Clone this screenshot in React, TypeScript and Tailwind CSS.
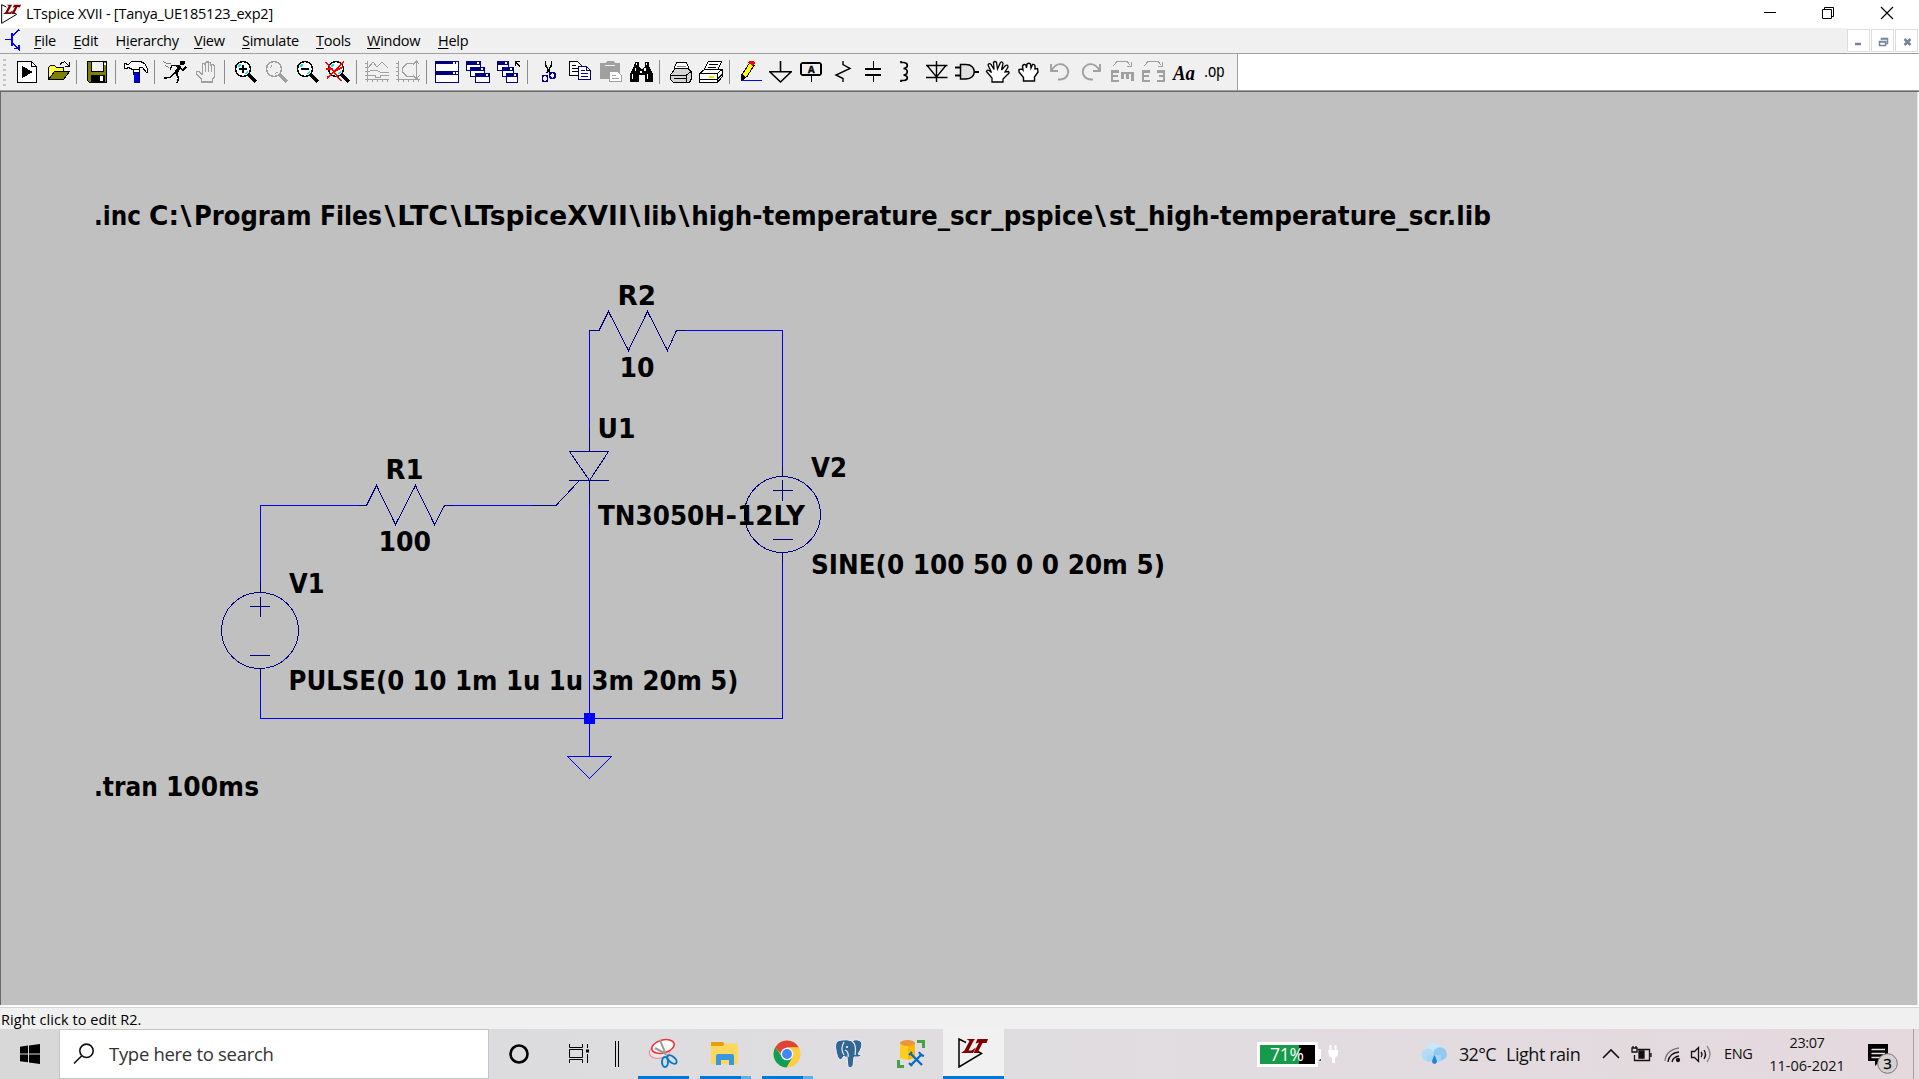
import React from "react";

type Kids = { children?: React.ReactNode };

const NAVY = "#000080";
const GRAY = "#a0a0a0";

/* ---------- toolbar ---------- */

function Tool({ children, smooth }: Kids & { smooth?: boolean }) {
  return (
    <svg
      className="h-6 w-[31px] shrink-0"
      viewBox="0 0 31 24"
      fill="none"
      stroke="#000"
      strokeWidth="1"
      shapeRendering={smooth ? "auto" : "crispEdges"}
    >
      {children}
    </svg>
  );
}

function Sep() {
  return (
    <div className="flex h-6 w-2 shrink-0 pl-0.5">
      <div className="h-6 w-px bg-[#8c8c8c]" />
    </div>
  );
}

function Lens({ color = "#000", glass = "#fff" }: { color?: string; glass?: string }) {
  return (
    <g>
      <circle cx="13" cy="9" r="7.5" fill={glass} stroke={color} strokeWidth="1.6" />
      {color === "#000" && <path d="M8 7L10.5 4.5M15.5 14L18 11.5" stroke="#00e5ee" strokeWidth="2" />}
      <path d="M19 15L26 22" stroke={color} strokeWidth="3" />
    </g>
  );
}

function MiniWin({ x, y, w = 14, h = 9 }: { x: number; y: number; w?: number; h?: number }) {
  return (
    <g>
      <rect x={x + 0.5} y={y + 0.5} width={w} height={h} fill="#fff" stroke={NAVY} />
      <rect x={x} y={y} width={w + 1} height="4" fill={NAVY} stroke="none" />
      <rect x={x + w - 3} y={y + 1} width="2" height="2" fill="#fff" stroke="none" />
    </g>
  );
}

function Toolbar() {
  return (
    <div className="flex h-[36px] w-full bg-white">
      <div className="flex h-[36px] w-[1238px] items-center border-r border-[#a0a0a0] bg-[#f0f0f0]">
        <div className="flex w-3 shrink-0 flex-col gap-[3px] pl-[3px]">
          {[0, 1, 2, 3, 4, 5].map((i) => (
            <div key={i} className="h-[2px] w-[3px] bg-[#c4c4c4]" />
          ))}
        </div>
        <Tool>
          <path d="M5.5 1.5H19.5L24.5 6.5V22.5H5.5Z" fill="#fff" />
          <path d="M19.5 1.5V6.5H24.5" />
          <path d="M10 6L21 12L10 18Z" fill="#000" stroke="none" />
        </Tool>
        <Tool>
          <path d="M5.5 19V7.5L7.5 5.5H11.5L13.5 7.5H20.5V12" fill="#ffff40" />
          <path d="M5.5 19.5L11.5 11.5H26.5L20.5 19.5Z" fill="#808000" />
          <path d="M17 4.5Q19 1.5 22 2L26 6M26.5 2V6.5H22" />
        </Tool>
        <Sep />
        <Tool>
          <path d="M5.5 1.5H24.5V22.5H7.5L5.5 20.5Z" fill="#808000" />
          <rect x="9.5" y="1.5" width="12" height="10" fill="#f0f0f0" />
          <rect x="22" y="3" width="2" height="2" fill="#fff" stroke="none" />
          <rect x="9" y="15" width="14" height="7" fill="#000" stroke="none" />
          <rect x="18" y="16" width="3" height="5" fill="#fff" stroke="none" />
        </Tool>
        <Sep />
        <Tool>
          <path d="M3.5 3.5V8.5H5.5L7.5 7.5L11.5 9.5H18.5V7.5L21.5 7.5L25.5 12.5H26.5V8.5L23.5 3.5L19.5 1.5H10.5L7.5 4.5Z" fill="#fff" />
          <path d="M12.5 9.5V12.5H18.5V9.5" fill="#fff" />
          <rect x="13" y="13" width="5" height="9" fill="#0000e8" stroke="none" />
          <path d="M12.5 12V15M18.5 12V22M13 22.5H19" stroke="#000060" />
        </Tool>
        <Sep />
        <Tool>
          <path d="M20 1h5v3l-2 1h-3Z" fill="#000" stroke="none" />
          <path d="M20 6L16 13" strokeWidth="3.5" />
          <path d="M20 6L12 5.5L10 9.5M20 8L23 10L26 7M15 13L10 17.5L4 18M16 13L18.5 18L17 23" strokeWidth="1.5" />
          <path d="M3 1.5L8 4L11 3M5 5.5L9 7.5" stroke="#808080" />
        </Tool>
        <Tool>
          <path
            d="M10.5 22V19L5.5 13.5V11.5H8L11.5 14.5V4.5L12.5 3.5L14.5 5V2.5L16 1.5L17.5 3V2L19.5 2.5V5L21.5 4.5L23.5 6V17.5L21.5 19V22Z"
            fill="#f0f0f0"
            stroke={GRAY}
            strokeWidth="1.4"
          />
          <path d="M14.5 5V12M17.5 3V12M20.5 5V12" stroke={GRAY} strokeWidth="1.4" />
        </Tool>
        <Sep />
        <Tool>
          <Lens />
          <path d="M9 9H17M13 5V13" strokeWidth="2" />
        </Tool>
        <Tool>
          <Lens color={GRAY} glass="#f0f0f0" />
          <path d="M9 8L11 5.5M14 14L16.5 12" stroke={GRAY} />
        </Tool>
        <Tool>
          <Lens />
          <path d="M9 9H17" strokeWidth="2" />
        </Tool>
        <Tool>
          <Lens />
          <path d="M3 2L18 21M21 2L4 18M3 9H10M10 12L20 7" stroke="#f00" strokeWidth="1.5" />
        </Tool>
        <Sep />
        <Tool>
          <g stroke={GRAY}>
            <path d="M5.5 1V22M3 19.5H27M3 3.5H6M3 7.5H6M3 11.5H6M3 15.5H6M10.5 19V22M15.5 19V22M20.5 19V22M25.5 19V22" />
            <path d="M6 8L11 2L15 7L20 2L26 8M6 12L10 10L14 10L18 12H27M6 15.5H13V17.5H18V15.5H27" />
          </g>
        </Tool>
        <Tool>
          <g stroke={GRAY}>
            <path d="M5.5 1V22M3 19.5H27M3 3.5H6M3 7.5H6M3 11.5H6M3 15.5H6M10.5 19V22M15.5 19V22M20.5 19V22M25.5 19V22" />
            <path d="M23.5 1V19M20 4.5L23.5 1L26.5 4.5M20 15.5L23.5 19L26.5 15.5M21 3.5H14L9.5 8V12L14 16.5H21" />
          </g>
        </Tool>
        <Sep />
        <Tool>
          <rect x="3.5" y="1.5" width="23" height="21" fill="#fff" stroke={NAVY} />
          <path d="M3 2.5H27M3 13.5H27" stroke={NAVY} strokeWidth="3" />
          <path d="M3 11.5H27" stroke={NAVY} />
          <path d="M21 2.5H23M24 2.5H26M21 13H23M24 13H26" stroke="#fff" strokeWidth="2" />
        </Tool>
        <Tool>
          <MiniWin x={3} y={1} />
          <MiniWin x={7} y={7} />
          <MiniWin x={12} y={13} />
        </Tool>
        <Tool>
          <MiniWin x={3} y={1} w={11} />
          <MiniWin x={8} y={7} w={11} />
          <MiniWin x={12} y={13} w={11} />
          <path d="M21 1.5H26M21.5 1V6M22 2L26 7" strokeWidth="1.4" />
        </Tool>
        <Sep />
        <Tool>
          <path d="M12.5 1V5L17 13M18.5 1V5L14 13" strokeWidth="1.6" />
          <g stroke="#000090" strokeWidth="1.6">
            <ellipse cx="12" cy="18.5" rx="2.6" ry="3.2" />
            <ellipse cx="19.5" cy="15.5" rx="2.8" ry="3" />
          </g>
        </Tool>
        <Tool>
          <path d="M5.5 1.5H13.5L17.5 5.5V15.5H5.5Z" fill="#fff" />
          <path d="M8 5.5H12M8 8.5H14M8 11.5H14" />
          <path d="M14.5 6.5H22.5L26.5 10.5V19.5H14.5Z" fill="#fff" stroke={NAVY} />
          <path d="M22.5 6.5V10.5H26.5M17 10.5H21M17 13.5H24M17 16.5H24" stroke={NAVY} />
        </Tool>
        <Tool>
          <path d="M5 3H10L12 1H18L20 3H25V19H5Z" fill={GRAY} stroke="none" />
          <path d="M10 5.5H20" stroke="#f0f0f0" />
          <path d="M14.5 11.5H22.5L26.5 15.5V21.5H14.5Z" fill="#fff" stroke={GRAY} />
          <path d="M17 15.5H21M17 18.5H24" stroke={GRAY} />
        </Tool>
        <Tool>
          <path d="M9 2H13V6L15 9H17L19 6V2H23V6L27 14V22H19V15H13V22H4V14L8 6Z" fill="#000" stroke="none" />
          <path d="M10.5 3V5M20.5 3V5M9.5 8V11M19 8V11M6.5 14V19M21.5 14V19M15 11V13" stroke="#fff" strokeWidth="1.6" />
        </Tool>
        <Sep />
        <Tool>
          <path d="M9 8.5L11.5 2.5H21.5L24 8.5" fill="#fff" />
          <path d="M5.5 14.5L10.5 8.5H22.5L26.5 11.5V18.5L24.5 22.5H8.5L5.5 19.5Z" fill="#d4d4d4" />
          <path d="M12 6.5H21" stroke="#888" />
          <path d="M5 15.5H21L26 11.5M8.5 18.5H22M21.5 15V22" />
        </Tool>
        <Tool>
          <path d="M8 9.5L12.5 1.5H25.5L22 9.5" fill="#fff" />
          <path d="M13 4.5H22M12 7.5H20" />
          <path d="M3.5 13.5L8.5 9.5H26.5V16.5L21.5 22.5H3.5Z" fill="#fff" />
          <path d="M3 13.5H21.5L26 9.5M21.5 13.5V22M3 19.5H21L26 14.5" />
          <path d="M13 16.5H18" stroke="#e8e800" strokeWidth="2" />
        </Tool>
        <Sep />
        <Tool>
          <path d="M7.5 14L14.5 3L19 5.5L12 16.5L7 20Z" fill="#ffff00" />
          <path d="M13 2.5L15 1H18L20 3L18 6Z" fill="#f00" stroke="none" />
          <path d="M6 14L10 17L6 21Z" fill="#000" />
          <path d="M7 20.5H27" stroke="#00f" />
        </Tool>
        <Tool smooth>
          <path d="M14.5 1V11.5M3 11.8H26M4 12L14.5 22L25 12" strokeWidth="1.6" />
        </Tool>
        <Tool>
          <rect x="4" y="3" width="20" height="12" rx="2" stroke="#808000" strokeWidth="2.5" />
          <rect x="4" y="3" width="20" height="12" rx="2" fill="#f0f0f0" strokeWidth="1.3" />
          <path d="M14.5 15V22" strokeWidth="1.5" />
          <text x="14.2" y="13" textAnchor="middle" fontSize="11" fontWeight="700" fontFamily="Liberation Mono, monospace" fill="#000" stroke="#000" strokeWidth="0.4">A</text>
        </Tool>
        <Tool smooth>
          <path d="M15 1V4.5L22 8.5L8 15L15 18.5V22" strokeWidth="1.4" />
        </Tool>
        <Tool>
          <path d="M14.5 1V9M14.5 14V22" strokeWidth="1.4" />
          <path d="M6 9H22M6 15H22" strokeWidth="2" />
        </Tool>
        <Tool smooth>
          <path d="M11 1V2.5H14C18.5 3 18.5 8 13.5 8.5C18.5 9 18.5 14.5 13.5 15C18.5 15.5 18.5 20 14 20.5H11V22" strokeWidth="1.7" />
        </Tool>
        <Tool smooth>
          <path d="M15.5 1V22M5 5.5H26.5M5 17.5H26.5M6.5 6L15.5 17L24.5 6" strokeWidth="1.4" />
        </Tool>
        <Tool smooth>
          <path d="M8.5 4.5H14C25 4.5 25 19 14 19H8.5Z" fill="#e0e0e0" strokeWidth="1.5" />
          <path d="M3 7.5H8M3 15.5H8M22 12H27" strokeWidth="1.8" />
        </Tool>
        <Tool smooth>
          <path
            d="M9 22V18L3.5 11.5Q4 9.5 6 10.5L8.5 12.5L5 5Q6 2.5 8 4.5L11 9.5L10.5 2.5Q12 .5 13.5 2.5L14.5 9L17.5 2.5Q19.5 1 20 3.5L18.5 10L22.5 5.5Q25 4.5 25 7L22 12L25.5 11.5Q27 13 24.5 14.5L20 19V22Z"
            fill="#fff"
            strokeWidth="1.3"
          />
        </Tool>
        <Tool smooth>
          <path
            d="M9.5 21V17.5L5 12V9.5L8 9L9 10L8.5 6Q10 3.5 12 5L12.5 8L13 4Q15 2.5 16.5 4L17 8L18.5 4.5Q20.5 4 21 6L21 9L23.5 8.5L24 12L20.5 17V21Z"
            fill="#fff"
            strokeWidth="1.4"
          />
        </Tool>
        <Tool smooth>
          <path d="M6 4V11H13M6.5 10.5Q11 2.5 18 4.5Q25 8 22.5 15Q20 20 13 19.5" stroke={GRAY} strokeWidth="1.9" />
        </Tool>
        <Tool smooth>
          <path d="M24 4V11H17M23.5 10.5Q19 2.5 12 4.5Q5 8 7.5 15Q10 20 17 19.5" stroke={GRAY} strokeWidth="1.9" />
        </Tool>
        <Tool>
          <path d="M12 11.5H5V21H12M4 16H11" stroke={GRAY} strokeWidth="2.6" />
          <path d="M14 13H27M15.5 12V19M20.5 12V19M25.5 12V21" stroke={GRAY} strokeWidth="2.6" />
          <path d="M6 6L10 1.5H20L23.5 5.5M24 2V6.5H20" stroke={GRAY} />
        </Tool>
        <Tool>
          <path d="M12 11.5H5V21H12M4 16H11M19 11.5H26V21H19M20.5 16H27" stroke={GRAY} strokeWidth="2.6" />
          <path d="M6 6L10 1.5H20L23.5 5.5M24 2V6.5H20" stroke={GRAY} />
        </Tool>
        <Tool smooth>
          <text x="4" y="20" textLength="22" lengthAdjust="spacingAndGlyphs" fontSize="20" fontWeight="700" fontStyle="italic" fontFamily="Liberation Serif, serif" fill="#000" stroke="none">Aa</text>
        </Tool>
        <Tool smooth>
          <text x="4" y="17" textLength="20.5" lengthAdjust="spacingAndGlyphs" fontSize="17.5" fontFamily="Liberation Sans, sans-serif" fill="#000" stroke="none">.op</text>
        </Tool>
      </div>
    </div>
  );
}

/* ---------- brand marks ---------- */

function LTLogo({ className }: { className: string }) {
  return (
    <svg className={className} viewBox="0 0 30 30" fill="none">
      <path d="M8 4.5L1 1V29L23.5 15.5L20 13.5" stroke="#000" strokeWidth="1.5" />
      <path d="M8.500 1H17L15.500 3L10.500 12.500H13.500L18 9.500L15 15H3L6.500 12.500L11.500 3Z" fill="#800000" />
      <path d="M19.500 1H30L28.500 5H24.500L20.500 13L21 15H15.500L21 4.500L17.500 5.500Z" fill="#800000" />
    </svg>
  );
}

/* ---------- title and menu ---------- */

function TitleBar() {
  return (
    <div className="flex h-7 w-full items-center bg-white">
      <LTLogo className="ml-px h-5 w-5" />
      <span className="ml-[5px] whitespace-pre text-[14.5px] leading-7 tracking-[-0.22px] text-black">LTspice XVII - [Tanya_UE185123_exp2]</span>
      <div className="ml-auto flex items-center">
        <svg className="h-7 w-[59px]" viewBox="0 0 59 28" stroke="#000" fill="none"><path d="M23 12.5H35" /></svg>
        <svg className="h-7 w-[59px]" viewBox="0 0 59 28" stroke="#000" fill="none"><path d="M22.5 9.5H31.5V18.5H22.5ZM24.5 9V7.5H33.5V16.5H32" /></svg>
        <svg className="h-7 w-[60px]" viewBox="0 0 60 28" stroke="#000" fill="none" strokeWidth="1.2"><path d="M22 7L34 19M34 7L22 19" /></svg>
      </div>
    </div>
  );
}

function Menu({ pre = "", u, post, w }: { pre?: string; u: string; post: string; w: string }) {
  return (
    <span className={`shrink-0 whitespace-nowrap ${w}`}>
      {pre}
      <span className="underline decoration-1 underline-offset-2">{u}</span>
      {post}
    </span>
  );
}

function MenuBar() {
  return (
    <div className="flex h-[25px] w-full bg-[#f0f0f0]">
      <svg className="h-[25px] w-[34px] shrink-0" viewBox="0 0 34 25" stroke="#0000ff" fill="none" shapeRendering="crispEdges">
        <path d="M5 11.5H11M12 8.5L19.5 1.5M12 14.5L20 22" strokeWidth="1.5" />
        <path d="M12 5V18" strokeWidth="2.5" />
        <path d="M14 20.5H19V16.5" strokeWidth="1.5" />
      </svg>
      <div className="flex text-[14.5px] leading-[25px] tracking-[-0.25px] text-black">
        <Menu u="F" post="ile" w="w-[39.5px]" />
        <Menu u="E" post="dit" w="w-[42px]" />
        <Menu pre="H" u="i" post="erarchy" w="w-[78.5px]" />
        <Menu u="V" post="iew" w="w-[48px]" />
        <Menu u="S" post="imulate" w="w-[74px]" />
        <Menu u="T" post="ools" w="w-[51px]" />
        <Menu u="W" post="indow" w="w-[71px]" />
        <Menu u="H" post="elp" w="w-[40px]" />
      </div>
      <div className="ml-auto flex h-[25px] gap-px bg-white pr-px pt-px">
        {[
          "M7 14.5H13M7 13.5H13",
          "M7.5 11.5H13.5V15.5H7.5ZM7 12H14M9.5 10V8.5H15.5V13.5H14M9 9H16",
          "M8.5 9L14.5 15M14.5 9L8.5 15",
        ].map((d, i) => (
          <div key={i} className="h-[23px] w-[23px] border border-[#dedede] bg-white">
            <svg className="h-[21px] w-[21px]" viewBox="0 0 21 21" fill="none" stroke="#75859a" strokeWidth={i === 2 ? 2.6 : 1.5}>
              <path d={d} />
            </svg>
          </div>
        ))}
      </div>
    </div>
  );
}

/* ---------- schematic ---------- */

function Label({ x, y, w, children }: { x: number; y: number; w: number; children: string }) {
  return (
    <text x={x} y={y} textLength={w} lengthAdjust="spacingAndGlyphs">
      {children}
    </text>
  );
}

/* One line of text made of runs, each with its own x and advance width. */
type Run = [x: number, w: number, run: string];

function RunLabel({ y, runs }: { y: number; runs: Run[] }) {
  return (
    <text y={y}>
      {runs.map(([x, w, run]) => (
        <tspan key={x} x={x} textLength={w} lengthAdjust="spacingAndGlyphs">
          {run}
        </tspan>
      ))}
    </text>
  );
}

const INCLUDE_RUNS: Run[] = [
  [94, 55, ".inc "],
  [149, 30, "C:"],
  [180.4, 11, "\\"],
  [194, 126, "Program "],
  [320, 62, "Files"],
  [384.4, 11, "\\"],
  [397.2, 51, "LTC"],
  [450.6, 11, "\\"],
  [462.8, 165, "LTspiceXVII"],
  [629.6, 11, "\\"],
  [643, 33.5, "lib"],
  [678.6, 11, "\\"],
  [691.2, 402, "high-temperature_scr_pspice"],
  [1095, 11, "\\"],
  [1109, 382, "st_high-temperature_scr.lib"],
];

function Schematic() {
  return (
    <svg className="block h-[914px] w-[1917px]" viewBox="1 92 1917 914" fill="none">
      <g stroke="#0000ff" shapeRendering="crispEdges">
        <path d="M260.5 584V505.5H358M453 505.5H532M589.5 428V330.5M686 330.5H782.5V467M782.5 563V718.5H260.5V679M589.5 505V756.5" />
        <path d="M567.5 756.5H611.5L589.5 778.5Z" />
      </g>
      <g stroke={NAVY} shapeRendering="crispEdges">
        <path d="M358 505.5H366.5L376.5 485.5L395.5 524.5L415.5 485.5L434.5 524.5L444.5 505.5H453" />
        <path d="M589 330.5H599L608.5 311.5L628.5 350.5L647.5 311.5L667.5 350.5L676.5 330.5H686" />
        <path d="M589.5 428V451M569.5 451.5H608.5L589.5 480.5ZM569 480.5H609M589.5 480V505M532 505.5H556L579 481" />
        <ellipse cx="260" cy="630.5" rx="38.5" ry="38" />
        <path d="M260.5 583V592M260.5 669V679M250 606.5H270M260.5 597V617M250 655.5H270" />
        <ellipse cx="782.5" cy="514.5" rx="38" ry="38" />
        <path d="M782.5 467V476M782.5 553V563M773 490.5H793M782.5 480V501M773 539.5H793" />
      </g>
      <rect x="584" y="713" width="11" height="11" fill="#0000ff" />
      <g className="whitespace-pre" fill="#000" fontFamily="DejaVu Sans, sans-serif" fontWeight="700" fontSize="27">
        <RunLabel y={225} runs={INCLUDE_RUNS} />
        <Label x={617.5} y={305} w={38.5}>R2</Label>
        <Label x={619.5} y={377} w={35}>10</Label>
        <Label x={597.5} y={438} w={38}>U1</Label>
        <RunLabel y={525} runs={[[598, 127, "TN3050H"], [725.5, 11.5, "-"], [737, 68, "12LY"]]} />
        <Label x={811} y={477} w={36}>V2</Label>
        <Label x={811} y={574} w={354}>SINE(0 100 50 0 0 20m 5)</Label>
        <Label x={385.5} y={479} w={38}>R1</Label>
        <Label x={378.5} y={551} w={52.5}>100</Label>
        <Label x={289} y={593} w={35.5}>V1</Label>
        <Label x={288.5} y={690} w={450}>PULSE(0 10 1m 1u 1u 3m 20m 5)</Label>
        <RunLabel y={796} runs={[[94, 72, ".tran "], [166, 93, "100ms"]]} />
      </g>
    </svg>
  );
}

/* ---------- taskbar ---------- */

function TaskApp({ bars, active, children }: Kids & { bars?: "one" | "two"; active?: boolean }) {
  return (
    <div className={active ? "flex h-[50px] w-[61px] flex-col items-center bg-[#f2f1f2]" : "flex h-[50px] w-[62px] flex-col items-center"}>
      <svg className="h-[47px] w-[62px]" viewBox="0 0 62 47" fill="none">{children}</svg>
      <div className="flex h-[3px] w-full">
        {active && <div className="h-[3px] w-full bg-[#0078d7]" />}
        {bars === "one" && <div className="ml-[5px] h-[3px] w-[51px] bg-[#0078d7]" />}
        {bars === "two" && (
          <>
            <div className="ml-[5px] h-[3px] w-[41px] bg-[#0078d7]" />
            <div className="h-[3px] w-[10px] bg-[#64aee8]" />
          </>
        )}
      </div>
    </div>
  );
}

function Taskbar() {
  return (
    <div className="flex h-[50px] w-full items-center bg-linear-to-r from-[#d9dadc] via-[#dfdde0] to-[#e5d9de]">
      <div className="flex h-[50px] w-[59px] shrink-0 items-center justify-center bg-[#d8d8d8]">
        <svg className="h-5 w-5" viewBox="0 0 20 20" fill="#000"><path d="M0 2.8L8 1.6V9.5H0ZM9 1.5L20 0V9.5H9ZM0 10.5H8V18.3L0 17.2ZM9 10.5H20V20L9 18.5Z" /></svg>
      </div>
      <div className="flex h-[50px] w-[430px] shrink-0 items-center border border-[#c5c5c5] bg-white">
        <svg className="ml-[12px] h-6 w-6" viewBox="0 0 24 24" fill="none" stroke="#111" strokeWidth="1.6"><circle cx="14.5" cy="8.8" r="6.7" /><path d="M9.8 13.7L2 21.5" /></svg>
        <span className="ml-[13px] whitespace-nowrap text-[18.5px] tracking-[-0.3px] text-[#333]">Type here to search</span>
      </div>
      <svg className="h-[50px] w-[144px] shrink-0" viewBox="489 1029 144 50" fill="none" stroke="#000">
        <circle cx="519" cy="1054" r="8.5" strokeWidth="2.6" />
        <path d="M569.5 1044V1047.5H582.5V1044M569.5 1063V1059.5H582.5V1063M569.5 1049.5H582.5V1057.5H569.5ZM587.5 1044V1048M587.5 1054V1063" />
        <path d="M586 1051H589" strokeWidth="3" />
        <path d="M615.5 1041V1067M618.5 1041V1067" />
      </svg>
      <div className="flex shrink-0">
        <TaskApp bars="one">
          <ellipse cx="27" cy="22" rx="11" ry="7" transform="rotate(-15 27 22)" stroke="#e88" fill="#f0e4e6" />
          <ellipse cx="30" cy="17.5" rx="11.5" ry="6.5" transform="rotate(-15 30 17.5)" stroke="#e33" fill="#fff" strokeWidth="1.5" />
          <path d="M27 11L33 26M22 19L33 25" stroke="#999" strokeWidth="2" />
          <ellipse cx="32" cy="33" rx="3" ry="5" stroke="#0a7bc8" strokeWidth="2" />
          <ellipse cx="39" cy="30.5" rx="3" ry="5.5" transform="rotate(-50 39 30.5)" stroke="#0a7bc8" strokeWidth="2" />
        </TaskApp>
        <TaskApp bars="two">
          <path d="M16 15V13H28L30 16H43V35H16Z" fill="#e2a10c" />
          <path d="M16 17H28L30 14.5H43V35H16Z" fill="#ffd75e" />
          <path d="M21 36V27Q21 25 23 25H37Q39 25 39 27V36H34V31H26V36Z" fill="#3a96dd" />
        </TaskApp>
        <TaskApp bars="two">
          <g transform="translate(-1 0)">
            <circle cx="31" cy="25" r="13.5" fill="#ffcd40" />
            <path d="M19.3 18.2A13.5 13.5 0 0 0 30.5 38.5L36 29H27Z" fill="#0f9d58" />
            <path d="M19.3 18.2A13.5 13.5 0 0 1 42.7 18.2H31L25 25Z" fill="#db4437" />
            <circle cx="31" cy="25" r="6.3" fill="#f4f4f4" />
            <circle cx="31" cy="25" r="4.9" fill="#4285f4" />
          </g>
        </TaskApp>
        <TaskApp>
          <g transform="translate(-1 0)">
            <path d="M24 11Q17 11 17.5 18Q19 31 23 31L26 27Q28 29 29 28L30 38Q33 40 35 37L36 28Q41 29 44 26L40 25Q45 18 43.5 13Q39 9 34 12Q29 10 24 11Z" fill="#336791" stroke="#eef" strokeWidth="1" />
            <path d="M26 13Q22 20 26 26M34 12Q39 16 37 26M27 21Q31 23 30 28" stroke="#dfe8f0" strokeWidth="1.3" />
            <circle cx="29" cy="18" r="1" fill="#fff" />
          </g>
        </TaskApp>
        <TaskApp>
          <g transform="translate(-1 0)">
            <path d="M20 14V29Q27 32 35 29V14Z" fill="#ffcf1f" />
            <path d="M28 14V31L35 29V14Z" fill="#ffb900" />
            <ellipse cx="27.5" cy="14" rx="7.5" ry="3" fill="#e8963c" />
            <path d="M37 12.5H43.5V19M24 37.5H18.5V31" stroke="#48a148" strokeWidth="3" />
            <path d="M31 25L42 36M42 25L31 36" stroke="#0a6cc0" strokeWidth="2.4" />
            <path d="M29 26L32 23M39 23L41 26L44 27M29 34L32 37" stroke="#0a6cc0" strokeWidth="2.2" />
          </g>
        </TaskApp>
        <TaskApp active>
          <svg x="15" y="9" width="30" height="30"><LTLogo className="h-[30px] w-[30px]" /></svg>
        </TaskApp>
      </div>
      <div className="ml-[253px] flex h-[25px] w-[61px] shrink-0 items-center border-[3px] border-white bg-linear-to-r from-[#169b4a] from-70% to-black to-70% pl-[10px]">
        <span className="text-[17.5px] leading-[19px] tracking-[-0.2px] text-white">71%</span>
      </div>
      <svg className="h-[26px] w-[24px] shrink-0" viewBox="0 0 24 26">
        <path d="M0 8H3V19H0Z" fill="#fff" /><path d="M2 18H3V20H1" fill="#555" />
        <path d="M12.5 4V10M17.5 4V10" stroke="#fff" strokeWidth="2" /><path d="M10 9H20V14L17 17V22H14V17L11 15Z" fill="#fff" />
      </svg>
      <svg className="ml-[79px] h-[28px] w-[26px] shrink-0" viewBox="0 0 26 28">
        <circle cx="12" cy="11" r="8" fill="#c6e8fb" /><circle cx="7" cy="15" r="6.5" fill="#b3dcf6" /><circle cx="19" cy="14" r="6.8" fill="#94c9ef" /><path d="M6 15H20V21.5H6Z" fill="#a7d6f5" />
        <path d="M13.5 15Q16 20 16 22Q13.5 26 11 22Q11 20 13.5 15Z" fill="#1f83d8" />
      </svg>
      <span className="ml-[12px] w-[47px] shrink-0 whitespace-nowrap text-[18px] tracking-[-0.7px] text-[#111]">32°C</span>
      <span className="w-[93px] shrink-0 whitespace-nowrap text-[18px] tracking-[-0.45px] text-[#111]">Light rain</span>
      <svg className="h-[50px] w-[125px] shrink-0" viewBox="1599 1029 125 50" fill="none" stroke="#111" strokeWidth="1.3">
        <path d="M1603 1058L1611 1050L1619 1058" strokeWidth="1.6" />
        <path d="M1637.5 1049.5H1649.5V1060.5H1634.5V1055M1651 1053V1057" />
        <path d="M1639 1051H1644V1058H1639Z" fill="#111" />
        <path d="M1632 1048H1637V1052H1632ZM1633 1048V1046M1636 1048V1046" />
        <path d="M1665 1061Q1666 1050 1679 1048" stroke="#777" />
        <path d="M1668 1062Q1669 1053 1679 1052M1672 1062Q1673 1057 1679 1056" />
        <circle cx="1678" cy="1060" r="1.5" fill="#111" />
        <path d="M1691.5 1051.5H1694.5L1698.5 1047.5V1061.5L1694.5 1057.5H1691.5ZM1701 1052Q1703 1054.5 1701 1057M1704 1050Q1707 1054.5 1704 1059" />
        <path d="M1707 1046Q1713 1054 1707 1062" stroke="#888" />
      </svg>
      <span className="w-[45px] shrink-0 text-[14.5px] tracking-[-0.4px] text-[#111]">ENG</span>
      <div className="flex w-[76px] shrink-0 flex-col items-center whitespace-nowrap pb-px text-[14.5px] leading-[23px] text-[#111]">
        <span className="tracking-[-0.4px]">23:07</span>
        <span>11-06-2021</span>
      </div>
      <svg className="h-[50px] w-[74px] shrink-0" viewBox="1845 1029 74 50" fill="none">
        <path d="M1868 1044H1888V1061H1880L1875 1066V1061H1868Z" fill="#000" />
        <path d="M1871.5 1049.5H1885M1871.5 1053.5H1885M1871.5 1057.5H1880" stroke="#e8e0e3" strokeWidth="1.3" />
        <circle cx="1887.5" cy="1063.5" r="9.8" fill="#d5d1d3" stroke="#777" />
        <text x="1887.5" y="1069" textAnchor="middle" fontSize="15" fill="#000" fontFamily="Open Sans, sans-serif" stroke="#000" strokeWidth="0.3">3</text>
        <path d="M1913.5 1029V1079" stroke="#a9a1a5" />
      </svg>
    </div>
  );
}

export default function App() {
  return (
    <div className="flex h-[1079px] w-[1919px] flex-col overflow-hidden bg-[#f0f0f0] font-['Open_Sans','Noto_Sans',sans-serif]">
      <TitleBar />
      <MenuBar />
      <div className="h-px w-full bg-[#a0a0a0]" />
      <Toolbar />
      <div className="h-px w-full bg-[#a0a0a0]" />
      <div className="flex h-[914px] w-full border-l border-t border-[#696969] bg-[#c0c0c0]">
        <div className="w-[1916px] shrink-0 overflow-hidden">
          <Schematic />
        </div>
        <div className="h-full w-px bg-[#e3e3e3]" />
        <div className="h-full w-px bg-white" />
      </div>
      <div className="h-px w-full bg-[#f8f8f8]" />
      <div className="h-px w-full bg-white" />
      <div className="flex h-[22px] w-full items-center border-t border-[#d4d4d4] bg-[#f0f0f0] pl-px pt-[2px]">
        <span className="whitespace-nowrap text-[14.5px] leading-5 tracking-[0.05px] text-black">Right click to edit R2.</span>
      </div>
      <Taskbar />
    </div>
  );
}
